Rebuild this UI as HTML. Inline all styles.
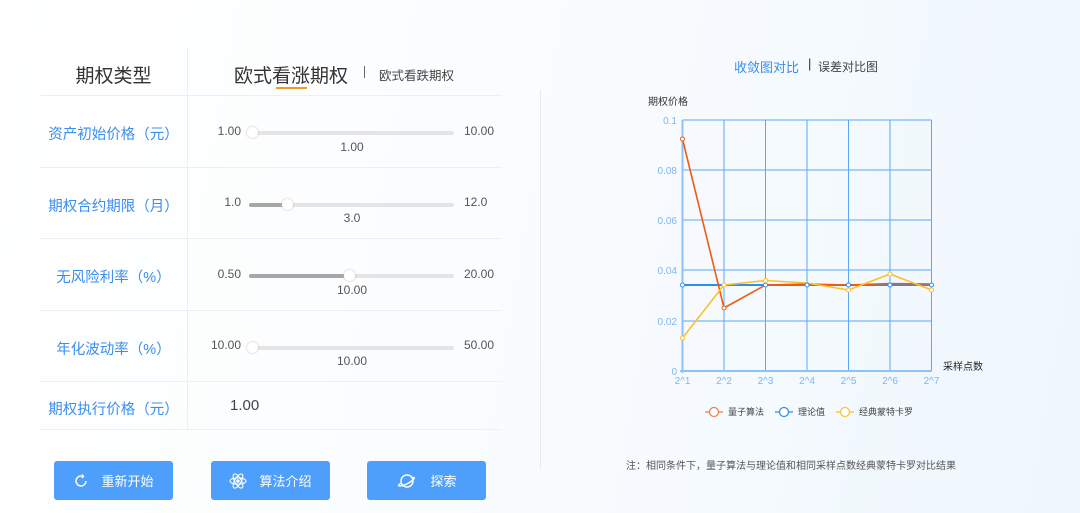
<!DOCTYPE html>
<html><head><meta charset="utf-8"><style>
*{margin:0;padding:0;box-sizing:border-box}
body{width:1080px;height:513px;overflow:hidden;font-family:"Liberation Sans","Noto Sans CJK SC",sans-serif;background:linear-gradient(100deg,#ffffff 0%,#fafcfe 45%,#eef7fd 100%);position:relative}
.a{position:absolute}
.hl{position:absolute;left:40px;width:462px;height:1px;background:#eceff3}
.lab{position:absolute;left:40px;width:147px;text-align:center;color:#3a8ef0;font-size:14.5px}
.mn{position:absolute;width:50px;text-align:right;font-size:12px;color:#555;left:191px}
.mx{position:absolute;left:464px;font-size:12px;color:#555}
.cv{position:absolute;left:300px;width:104px;text-align:center;font-size:12px;color:#555}
.tr{position:absolute;left:249px;width:205px;height:4px;border-radius:2px;background:#e4e4e4}
.fill{position:absolute;left:0;top:0;height:4px;border-radius:2px;background:#a6a6a6}
.kn{position:absolute;width:11px;height:11px;border-radius:50%;background:#fff;top:-4px;box-shadow:0 0 2px #bbb}
.btn{position:absolute;top:461px;width:119px;height:39px;background:#4e9ffb;border-radius:3px;color:#fff;font-size:13px;display:flex;align-items:center;justify-content:center;gap:12px}
</style></head><body>
<div class="a" style="left:187px;top:48px;width:1px;height:381px;background:#eceff3"></div>
<div class="a" style="left:540px;top:90px;width:1px;height:378px;background:#e6e9ee"></div>
<div class="hl" style="top:95px"></div><div class="hl" style="top:167px"></div><div class="hl" style="top:238px"></div><div class="hl" style="top:310px"></div><div class="hl" style="top:381px"></div><div class="hl" style="top:429px"></div>

<div class="a" style="left:40px;width:147px;top:61px;text-align:center;font-size:19px;color:#333">期权类型</div>
<div class="a" style="left:234px;top:61px;font-size:19px;color:#333">欧式看涨期权</div>
<div class="a" style="left:276px;top:87px;width:31px;height:2px;background:#f39a1c"></div>
<div class="a" style="left:364px;top:66px;width:1px;height:12px;background:#666"></div>
<div class="a" style="left:379px;top:65px;font-size:12.5px;color:#444">欧式看跌期权</div>

<div class="lab" style="top:123px">资产初始价格（元）</div>
<div class="mn" style="top:124px">1.00</div><div class="tr" style="top:131px"><div class="kn" style="left:-2px"></div></div><div class="mx" style="top:124px">10.00</div><div class="cv" style="top:140px">1.00</div>

<div class="lab" style="top:195px">期权合约期限（月）</div>
<div class="mn" style="top:195px">1.0</div><div class="tr" style="top:203px"><div class="fill" style="width:38px"></div><div class="kn" style="left:33px"></div></div><div class="mx" style="top:195px">12.0</div><div class="cv" style="top:211px">3.0</div>

<div class="lab" style="top:266px">无风险利率（%）</div>
<div class="mn" style="top:267px">0.50</div><div class="tr" style="top:274px"><div class="fill" style="width:100px"></div><div class="kn" style="left:95px"></div></div><div class="mx" style="top:267px">20.00</div><div class="cv" style="top:283px">10.00</div>

<div class="lab" style="top:338px">年化波动率（%）</div>
<div class="mn" style="top:338px">10.00</div><div class="tr" style="top:346px"><div class="kn" style="left:-2px"></div></div><div class="mx" style="top:338px">50.00</div><div class="cv" style="top:354px">10.00</div>

<div class="lab" style="top:398px">期权执行价格（元）</div>
<div class="a" style="left:230px;top:397px;font-size:15px;color:#444">1.00</div>

<div class="btn" style="left:54px"><svg width="16" height="16" viewBox="0 0 16 16" fill="none" stroke="#fff" stroke-width="1.4"><path d="M13 8A5 5 0 1 1 10 3.4"/><path d="M9 1.5l1.6 2-2 1.4"/></svg><span>重新开始</span></div>
<div class="btn" style="left:211px"><svg width="18" height="18" viewBox="0 0 18 18" fill="none" stroke="#fff" stroke-width="1.1"><ellipse cx="9" cy="9" rx="8" ry="3.2"/><ellipse cx="9" cy="9" rx="8" ry="3.2" transform="rotate(60 9 9)"/><ellipse cx="9" cy="9" rx="8" ry="3.2" transform="rotate(-60 9 9)"/><circle cx="9" cy="9" r="1.2" fill="#fff"/></svg><span>算法介绍</span></div>
<div class="btn" style="left:367px"><svg width="22" height="18" viewBox="0 0 22 18" fill="none" stroke="#fff" stroke-width="1.4"><circle cx="11" cy="9" r="6"/><path d="M5.5 11c-4 2-4 3.5 0 2.8 3-.5 8-2.8 11-5.5 3-2.6 2-3.5-1-2.5"/></svg><span>探索</span></div>

<div class="a" style="left:734px;top:57px;font-size:13px;color:#3a8ef0">收敛图对比</div>
<div class="a" style="left:808px;top:56px;font-size:13px;color:#333">|</div>
<div class="a" style="left:818px;top:58px;font-size:12px;color:#444">误差对比图</div>

<svg class="a" style="left:600px;top:90px" width="420" height="340" viewBox="600 90 420 340" font-family="Liberation Sans,Noto Sans CJK SC,sans-serif">
<text x="648" y="105" font-size="10" fill="#333">期权价格</text>
<g stroke="#5aa7f8" stroke-width="1">
<line x1="682.5" y1="120" x2="931.5" y2="120"/><line x1="682.5" y1="170" x2="931.5" y2="170"/><line x1="682.5" y1="220" x2="931.5" y2="220"/><line x1="682.5" y1="270" x2="931.5" y2="270"/><line x1="682.5" y1="321" x2="931.5" y2="321"/>
<line x1="724" y1="120" x2="724" y2="371"/><line x1="765.5" y1="120" x2="765.5" y2="371"/><line x1="807" y1="120" x2="807" y2="371"/><line x1="848.5" y1="120" x2="848.5" y2="371"/><line x1="890" y1="120" x2="890" y2="371"/><line x1="931.5" y1="120" x2="931.5" y2="371"/>
</g>
<line x1="682.5" y1="120" x2="682.5" y2="373" stroke="#8cc4fa" stroke-width="2"/>
<line x1="680" y1="371" x2="932" y2="371" stroke="#8cc4fa" stroke-width="2"/>
<g font-size="10" fill="#7cb7f6" text-anchor="end"><text x="677" y="124">0.1</text><text x="677" y="174">0.08</text><text x="677" y="224">0.06</text><text x="677" y="274">0.04</text><text x="677" y="325">0.02</text><text x="677" y="375">0</text></g>
<g font-size="10" fill="#7cb7f6" text-anchor="middle"><text x="682.5" y="384">2^1</text><text x="724" y="384">2^2</text><text x="765.5" y="384">2^3</text><text x="807" y="384">2^4</text><text x="848.5" y="384">2^5</text><text x="890" y="384">2^6</text><text x="931.5" y="384">2^7</text></g>
<text x="943" y="370" font-size="10" fill="#222">采样点数</text>
<polyline points="682.5,285 931.5,285" stroke="#2d8ef0" stroke-width="2" fill="none"/>
<polyline points="682.5,139 724,308 765.5,285 807,284 848.5,285 890,283.5 931.5,284" stroke="#f05a14" stroke-width="1.6" fill="none"/>
<polyline points="682.5,338 724,285 765.5,280.5 807,283 848.5,290 890,274 931.5,290" stroke="#fbc02d" stroke-width="1.6" fill="none"/>
<g fill="#fff" stroke-width="1"><circle cx="682.5" cy="139" r="2" stroke="#f05a14"/><circle cx="724" cy="308" r="2" stroke="#f05a14"/><circle cx="682.5" cy="285" r="2" stroke="#2d8ef0"/><circle cx="765.5" cy="285" r="2" stroke="#2d8ef0"/><circle cx="807" cy="285" r="2" stroke="#2d8ef0"/><circle cx="848.5" cy="285" r="2" stroke="#2d8ef0"/><circle cx="890" cy="285" r="2" stroke="#2d8ef0"/><circle cx="931.5" cy="285" r="2" stroke="#2d8ef0"/><circle cx="682.5" cy="338" r="2" stroke="#fbc02d"/><circle cx="724" cy="285" r="2" stroke="#fbc02d"/><circle cx="765.5" cy="280.5" r="2" stroke="#fbc02d"/><circle cx="848.5" cy="290" r="2" stroke="#fbc02d"/><circle cx="890" cy="274" r="2" stroke="#fbc02d"/><circle cx="931.5" cy="290" r="2" stroke="#fbc02d"/></g>
<g font-size="9" fill="#444" stroke-width="1.2">
<line x1="705" y1="412" x2="723" y2="412" stroke="#f07a4a"/><circle cx="714" cy="412" r="4.5" fill="#fff" stroke="#f07a4a"/><text x="728" y="415">量子算法</text>
<line x1="775" y1="412" x2="793" y2="412" stroke="#2d8ef0"/><circle cx="784" cy="412" r="4.5" fill="#fff" stroke="#2d8ef0"/><text x="798" y="415">理论值</text>
<line x1="836" y1="412" x2="854" y2="412" stroke="#fbc02d"/><circle cx="845" cy="412" r="4.5" fill="#fff" stroke="#fbc02d"/><text x="859" y="415">经典蒙特卡罗</text>
</g>
</svg>
<div class="a" style="left:626px;top:457px;font-size:10px;color:#555">注：相同条件下，量子算法与理论值和相同采样点数经典蒙特卡罗对比结果</div>
</body></html>
